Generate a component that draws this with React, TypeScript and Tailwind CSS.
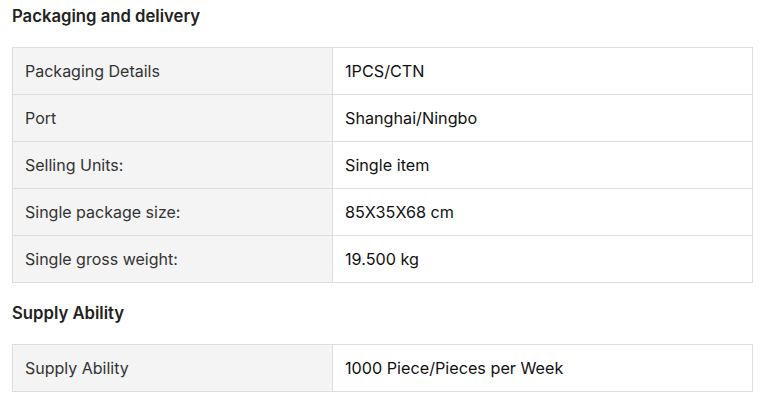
import React from 'react'

type Row = { label: string; value: string }

const packaging: Row[] = [
    { label: 'Packaging Details', value: '1PCS/CTN' },
    { label: 'Port', value: 'Shanghai/Ningbo' },
    { label: 'Selling Units:', value: 'Single item' },
    { label: 'Single package size:', value: '85X35X68 cm' },
    { label: 'Single gross weight:', value: '19.500 kg' },
]

const supply: Row[] = [{ label: 'Supply Ability', value: '1000 Piece/Pieces per Week' }]

function AttrTable({ rows }: { rows: Row[] }) {
    return (
        <table className="w-[741px] border-collapse text-base leading-5">
            <tbody>
                {rows.map((r) => (
                    <tr key={r.label} className="h-[47px]">
                        <td className="w-[320px] border border-[#dddddd] bg-[#f4f4f4] px-3 text-[#333333]">{r.label}</td>
                        <td className="border border-[#dddddd] bg-white px-3 text-[16.2px] text-[#111111]">{r.value}</td>
                    </tr>
                ))}
            </tbody>
        </table>
    )
}

function App() {
    return (
        <div className="min-h-[403px] bg-white px-3 pt-1 font-['Inter',sans-serif]">
            <h3 className="h-6 text-[16.7px] font-semibold leading-6 text-[#222222]">Packaging and delivery</h3>
            <div className="mt-[19px]">
                <AttrTable rows={packaging} />
            </div>
            <h3 className="mt-[18px] h-6 text-[16.7px] font-semibold leading-6 text-[#222222]">Supply Ability</h3>
            <div className="mt-[19px]">
                <AttrTable rows={supply} />
            </div>
        </div>
    )
}

export default App
